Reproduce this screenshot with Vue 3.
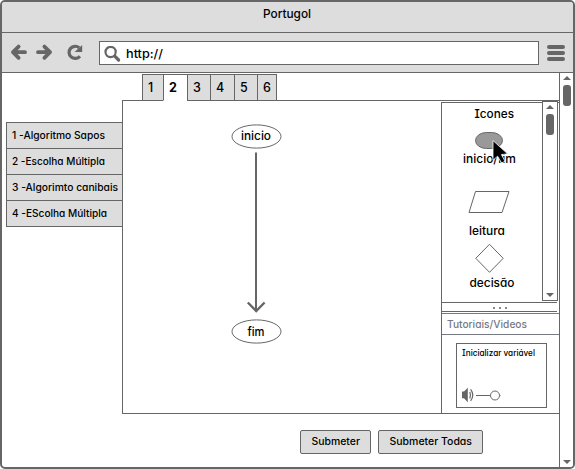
<script setup>
import { ref } from 'vue'

const tabs = [
  { label: '1', w: 21 },
  { label: '2', w: 24 },
  { label: '3', w: 23 },
  { label: '4', w: 24 },
  { label: '5', w: 23 },
  { label: '6', w: 20 },
]
const active = ref('2')
const exercises = [
  { name: '1 -Algoritmo Sapos', width: 93 },
  { name: '2 -Escolha Múltipla', width: 93 },
  { name: '3 -Algorimto canibais', width: 106 },
  { name: '4 -EScolha Múltipla', width: 95 },
]
</script>

<template>
  <div class="window">
    <header class="title">
      <svg width="571" height="22"><text x="261" y="15.5" textLength="48" lengthAdjust="spacingAndGlyphs">Portugol</text></svg>
    </header>
    <div class="toolbar">
      <svg class="nav" width="84" height="20" fill="none" stroke="#666" stroke-width="3.8">
        <path d="M10.6 4.6 L5 10.2 L10.6 15.8 M5 10.2 H17" stroke-linecap="round" stroke-linejoin="round" />
        <path d="M30 10.2 H42 M36.4 4.6 L42 10.2 L36.4 15.8" stroke-linecap="round" stroke-linejoin="round" />
        <path d="M71.2 5.8 A6.1 6.1 0 1 0 71.9 14.2" stroke-width="3.2" />
        <path d="M74.2 3 V10 H66.6 Z" fill="#666" stroke="none" />
      </svg>
      <div class="address">
        <svg class="lens" width="18" height="18" fill="none" stroke="#666">
          <circle cx="6.6" cy="6" r="5.1" stroke-width="2.2" />
          <path d="M10.8 10.2 L14.6 14" stroke-width="3.2" stroke-linecap="round" />
        </svg>
        <svg width="50" height="22"><text x="4" y="15.5" textLength="37" lengthAdjust="spacingAndGlyphs">http://</text></svg>
      </div>
      <div class="burger"><i></i><i></i><i></i></div>
    </div>

    <div class="body">
      <aside class="side">
        <button v-for="e in exercises" :key="e.name" class="exercise">
          <svg width="114" height="24"><text x="5" y="15.4" :textLength="e.width" lengthAdjust="spacingAndGlyphs">{{ e.name }}</text></svg>
        </button>
      </aside>
      <main class="main">
        <nav class="tabs">
          <button
            v-for="t in tabs"
            :key="t.label"
            class="tab"
            :class="{ active: t.label === active }"
            :style="{ width: t.w + 'px' }"
            @click="active = t.label"
          >{{ t.label }}</button>
        </nav>
        <div class="panel">
          <svg class="canvas" width="318" height="312" fill="none" stroke="#666">
            <ellipse cx="133.5" cy="35.5" rx="24.5" ry="11.6" />
            <text x="118" y="39" textLength="30" lengthAdjust="spacingAndGlyphs">inicio</text>
            <path d="M133 51.5 V210" stroke-width="2" />
            <path d="M124.8 201.5 L133.2 210 L141.6 201.5" stroke-width="2.4" />
            <ellipse cx="133.5" cy="230.5" rx="24.5" ry="11.6" />
            <text x="124.5" y="234.5" textLength="17" lengthAdjust="spacingAndGlyphs">fim</text>
          </svg>
          <section class="dock">
            <div class="palette">
              <svg class="shapes" width="100" height="199" fill="none" stroke="#666">
                <text x="32.5" y="15" textLength="39.5" lengthAdjust="spacingAndGlyphs">Icones</text>
                <rect x="33.5" y="29.5" width="27" height="16" rx="11" ry="8" fill="#999" />
                <text x="21" y="60" textLength="53" lengthAdjust="spacingAndGlyphs">inicio/fim</text>
                <path d="M33.5 88.5 H67 L60 109.5 H27 Z" />
                <text x="27" y="132" textLength="36" lengthAdjust="spacingAndGlyphs">leitura</text>
                <path d="M47.5 141.3 L61.2 155.3 L47.5 169.3 L33.8 155.3 Z" />
                <text x="27.5" y="184" textLength="45" lengthAdjust="spacingAndGlyphs">decisão</text>
                <path d="M51 37.6 V57.2 L55.6 53.2 L59.6 60 L63 58.2 L59.4 51.6 L65.6 50.8 Z" fill="#000" stroke="#fff" stroke-width=".8" />
              </svg>
              <div class="scroll inner">
                <i class="up"></i><i class="thumb"></i><i class="down"></i>
              </div>
            </div>
            <div class="grip"><i></i><i></i><i></i></div>
            <h2 class="heading">
              <svg width="110" height="20"><text x="5" y="13.7" textLength="80" lengthAdjust="spacingAndGlyphs">Tutoriais/Videos</text></svg>
            </h2>
            <div class="tutorial">
              <article class="video">
                <svg width="89" height="63" fill="none" stroke="#666">
                  <text x="5" y="12" textLength="73" lengthAdjust="spacingAndGlyphs">Inicializar variável</text>
                  <path d="M5 47.5 H7 L10.8 43.8 V58.2 L7 54.3 H5 Z" fill="#666" stroke="none" />
                  <path d="M12.8 48 Q14.2 51 12.8 54.4 M13.6 45.4 Q18 51 13.6 56.8" stroke-width="1.2" />
                  <path d="M19 51.5 H43.5" />
                  <circle cx="38" cy="51.5" r="4.5" fill="#fff" />
                </svg>
              </article>
            </div>
          </section>
        </div>
        <footer class="actions">
          <button class="submit one"><svg width="69" height="22"><text x="10.5" y="14" textLength="48.5" lengthAdjust="spacingAndGlyphs">Submeter</text></svg></button>
          <button class="submit all"><svg width="103" height="22"><text x="10.5" y="14" textLength="82.5" lengthAdjust="spacingAndGlyphs">Submeter Todas</text></svg></button>
        </footer>
      </main>
      <div class="scroll outer">
        <i class="up"></i><i class="thumb"></i><i class="down"></i>
      </div>
    </div>
  </div>
</template>

<style>
body { background: #fff; }
</style>

<style scoped>
* { box-sizing: border-box; }
.window {
  width: 575px; height: 469px; display: flex; flex-direction: column; overflow: hidden;
  border: 2px solid #666; border-radius: 5px; background: #fff; color: #000;
  font: 500 12px Inter, "Noto Sans", sans-serif;
  font-feature-settings: "cv11", "cv08";
}
svg { display: block; flex: none; }
text { fill: #000; stroke: none; font-size: 12px; }
button { padding: 0; margin: 0; font: inherit; color: inherit; font-feature-settings: inherit; }
.title { height: 31px; flex: none; background: #ddd; border-bottom: 1px solid #666; }
.toolbar {
  height: 40px; flex: none; display: flex; align-items: flex-start; padding: 8px 8px 0 6px;
  background: #ddd; border-bottom: 1px solid #666;
}
.nav { margin: 1px 7px 0 0; }
.address { width: 441px; height: 24px; display: flex; border: 1px solid #666; background: #fff; }
.lens { margin: 4px 0 0 4px; }
.burger { width: 18px; margin: 4px 0 0 8px; display: flex; flex-direction: column; gap: 2px; }
.burger i { height: 4px; border-radius: 2px; background: #666; }
.body { flex: 1; min-height: 0; display: flex; }
.side { width: 120px; flex: none; padding: 49px 0 0 4px; display: flex; flex-direction: column; }
.exercise { height: 26px; flex: none; background: #ddd; border: 1px solid #666; border-width: 1px 0 0 1px; }
.exercise:last-child { height: 27px; border-bottom-width: 1px; }
.exercise text { font-size: 10px; }
.main { width: 437px; flex: none; display: flex; flex-direction: column; }
.tabs { height: 28px; padding: 1px 0 0 20px; display: flex; flex: none; position: relative; z-index: 1; }
.tab { height: 27px; background: #ddd; border: 1px solid #666; border-width: 1px 0 1px 1px; font-size: 12.5px; line-height: 23px; text-align: left; padding-left: 5px; }
.tab:last-child { width: 21px; border-right-width: 1px; }
.tab.active { background: #fff; border-bottom-color: #fff; font-weight: 700; border-left-width: 1px; }
.panel { height: 314px; margin-top: -1px; flex: none; display: flex; border: 1px solid #666; border-right: 0; }
.dock { width: 118px; display: flex; flex-direction: column; border-left: 1px solid #666; margin-top: 1px; }
.palette { height: 200px; flex: none; display: flex; border-top: 1px solid #666; }
.scroll { display: flex; flex-direction: column; align-items: center; flex: none; background: #fff; border-left: 1px solid #666; }
.outer { width: 14px; padding: 3px 0; }
.inner { width: 16px; height: 200px; margin-top: -2px; padding: 3px 0; border: 1px solid #666; }
.up { border: 4px solid transparent; border-top: 0; border-bottom: 4px solid #666; }
.down { margin-top: auto; border: 4px solid transparent; border-bottom: 0; border-top: 4px solid #666; }
.thumb { width: 8px; height: 21px; margin-top: 5px; border-radius: 3px; background: #666; }
.grip { width: 115px; height: 10px; flex: none; display: flex; justify-content: center; gap: 4px; padding-top: 4px; border: 1px solid #666; border-width: 1px 0; }
.grip i { width: 2px; height: 2px; background: #888; }
.heading { margin: 1px 0 0; height: 22px; flex: none; border: 1px solid #777983; border-width: 1px 0; }
.heading text { font-size: 10.5px; font-weight: 500; fill: #777983; }
.tutorial { padding: 8px 0 0 14px; }
.video { width: 91px; height: 65px; border: 1px solid #666; }
.video text { font-size: 8.5px; }
.actions { display: flex; gap: 7px; padding: 16px 0 0 178px; }
.submit { height: 24px; background: #ddd; border: 1px solid #666; border-radius: 2px; }
.one { width: 71px; }
.all { width: 105px; }
.submit text { font-size: 10px; }
</style>
